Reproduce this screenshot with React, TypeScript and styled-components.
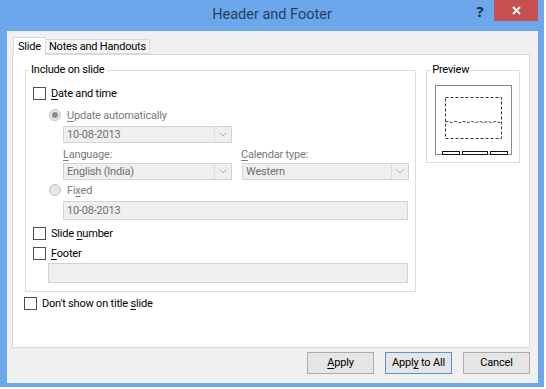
import React from "react";
import styled, { createGlobalStyle } from "styled-components";

const GlobalStyle = createGlobalStyle`
  html, body {
    margin: 0;
    padding: 0;
    background: #ffffff;
  }
  body {
    font-family: Roboto, "Open Sans", sans-serif;
    font-size: 11px;
    letter-spacing: -0.2px;
    color: #000;
  }
  * {
    box-sizing: border-box;
  }
`;

const Frame = styled.div`
  width: 544px;
  height: 387px;
  background: #6ba7ea;
  display: flex;
  flex-direction: column;
`;

const TitleBar = styled.div`
  height: 31px;
  display: grid;
  grid-template-columns: 1fr auto 1fr;
`;

const Title = styled.div`
  grid-column: 2;
  font-size: 14.5px;
  letter-spacing: 0;
  line-height: 30px;
  color: #253f63;
`;

const Controls = styled.div`
  display: flex;
  justify-content: flex-end;
  align-items: flex-start;
  padding-right: 6px;
`;

const HelpButton = styled.div`
  width: 26px;
  height: 21px;
  margin-right: 1px;
  font-family: "Open Sans", sans-serif;
  font-size: 15px;
  font-weight: 700;
  line-height: 22px;
  text-align: center;
  color: #1b2c48;
`;

const CloseButton = styled.div`
  width: 44px;
  height: 21px;
  background: #c75050;
  display: flex;
  align-items: center;
  justify-content: center;
`;

const Client = styled.div`
  flex: 1;
  margin: 0 6px 4px 7px;
  background: #f0f0f0;
  padding: 6px 8px 9px 5px;
  display: flex;
  flex-direction: column;
`;

const TabStrip = styled.div`
  display: flex;
  align-items: flex-end;
  height: 17px;
  padding-left: 1px;
  position: relative;
  z-index: 1;
`;

const Tab = styled.div<{ $active?: boolean }>`
  height: ${(p) => (p.$active ? 18 : 15)}px;
  margin-bottom: ${(p) => (p.$active ? -1 : 0)}px;
  padding: 0 ${(p) => (p.$active ? 4 : 3)}px;
  background: ${(p) => (p.$active ? "#ffffff" : "#f6f6f6")};
  border: 1px solid #d9d9d9;
  border-bottom: ${(p) => (p.$active ? "none" : "1px solid #d9d9d9")};
  border-left: ${(p) => (p.$active ? "1px solid #d9d9d9" : "none")};
  line-height: ${(p) => (p.$active ? 17 : 14)}px;
  white-space: nowrap;
`;

const Panel = styled.div`
  height: 294px;
  background: #ffffff;
  border: 1px solid #d9d9d9;
  padding: 15px 9px 0 11px;
  display: flex;
  flex-direction: column;
`;

const TopRow = styled.div`
  display: flex;
  align-items: flex-start;
  gap: 9px;
`;

const Group = styled.div<{ $w: number; $h: number }>`
  width: ${(p) => p.$w}px;
  height: ${(p) => p.$h}px;
  margin-left: 1px;
  border: 1px solid #dcdcdc;
  display: flex;
  flex-direction: column;
  align-items: flex-start;
`;

const Caption = styled.div`
  margin: -9px 0 0 3px;
  padding: 0 2px;
  height: 16px;
  line-height: 16px;
  background: #ffffff;
  color: #000;
`;

const Row = styled.div<{ $indent?: number; $mt?: number; $h?: number }>`
  display: flex;
  align-items: center;
  height: ${(p) => p.$h ?? 20}px;
  margin-left: ${(p) => p.$indent ?? 0}px;
  margin-top: ${(p) => p.$mt ?? 0}px;
`;

const Box = styled.span`
  width: 13px;
  height: 13px;
  border: 1px solid #4d4d4d;
  background: #ffffff;
  flex: none;
`;

const Radio = styled.span<{ $on?: boolean }>`
  width: 12px;
  height: 12px;
  border-radius: 50%;
  border: 1px solid #c4c4c4;
  background: #e6e6e6;
  flex: none;
  display: flex;
  align-items: center;
  justify-content: center;
  &::after {
    content: "";
    display: ${(p) => (p.$on ? "block" : "none")};
    width: 6px;
    height: 6px;
    border-radius: 50%;
    background: #8d8d8d;
  }
`;

const Label = styled.span<{ $dim?: boolean; $gap?: number }>`
  margin-left: ${(p) => p.$gap ?? 5}px;
  color: ${(p) => (p.$dim ? "#7a7a7a" : "#000")};
  white-space: nowrap;
`;

const U = styled.span`
  text-decoration: underline;
  text-underline-offset: 2px;
`;

const FieldLabel = styled.span<{ $w: number }>`
  width: ${(p) => p.$w}px;
  color: #7a7a7a;
`;

const Field = styled.div<{ $w: number; $h?: number }>`
  width: ${(p) => p.$w}px;
  height: ${(p) => p.$h ?? 17}px;
  border: 1px solid #d3d3d3;
  background: #efefef;
  display: flex;
  align-items: center;
  color: #707070;
  flex: none;
`;

const FieldText = styled.span`
  flex: 1;
  padding-left: 3px;
`;

const Arrow = styled.span`
  width: 17px;
  height: 100%;
  border-left: 1px solid #dedede;
  display: flex;
  align-items: center;
  justify-content: center;
`;

const Fields = styled.div`
  display: flex;
  gap: 10px;
`;

const Thumb = styled.svg`
  margin: 7px 0 0 8px;
  display: block;
`;

const ButtonRow = styled.div`
  display: flex;
  justify-content: flex-end;
  gap: 11px;
  margin-top: 4px;
`;

const Button = styled.div<{ $default?: boolean }>`
  width: 67px;
  height: 22px;
  border: 1px solid ${(p) => (p.$default ? "#5b93cf" : "#acacac")};
  background: #e5e5e5;
  line-height: 20px;
  text-align: center;
`;

const Chevron = () => (
  <svg width="8" height="5" viewBox="0 0 8 5">
    <path d="M0.5 0.5 L4 4 L7.5 0.5" fill="none" stroke="#b0b0b0" strokeWidth="1" />
  </svg>
);

const Select = ({ w, value }: { w: number; value: string }) => (
  <Field $w={w}>
    <FieldText>{value}</FieldText>
    <Arrow>
      <Chevron />
    </Arrow>
  </Field>
);

const SlideThumb = () => (
  <Thumb width="78" height="71" viewBox="0 0 78 71">
    <rect x="0.5" y="0.5" width="76" height="69" fill="#fff" stroke="#8a8a8a" />
    <rect
      x="10.5"
      y="12.5"
      width="56"
      height="41"
      fill="none"
      stroke="#333"
      strokeDasharray="3 2"
    />
    <path
      d="M10.5 37 q2 -1.2 4 0 t4 0 t4 0 t4 0 t4 0 t4 0 t4 0 t4 0 t4 0 t4 0 t4 0 t4 0 t4 0 t4 0"
      fill="none"
      stroke="#333"
      strokeDasharray="3 1.5"
    />
    <rect x="7.5" y="66.5" width="17" height="3" fill="#fff" stroke="#111" />
    <rect x="27.5" y="66.5" width="25" height="3" fill="#fff" stroke="#111" />
    <rect x="55.5" y="66.5" width="17" height="3" fill="#fff" stroke="#111" />
  </Thumb>
);

export default function App() {
  return (
    <>
      <GlobalStyle />
      <Frame>
        <TitleBar>
          <Title>Header and Footer</Title>
          <Controls>
            <HelpButton>?</HelpButton>
            <CloseButton>
              <svg width="9" height="9" viewBox="0 0 9 9">
                <path d="M1 1 L8 8 M8 1 L1 8" stroke="#fff" strokeWidth="1.8" />
              </svg>
            </CloseButton>
          </Controls>
        </TitleBar>
        <Client>
          <TabStrip>
            <Tab $active>Slide</Tab>
            <Tab>Notes and Handouts</Tab>
          </TabStrip>
          <Panel>
            <TopRow>
              <Group $w={392} $h={222}>
                <Caption>Include on slide</Caption>
                <Row $indent={7} $mt={5}>
                  <Box />
                  <Label>
                    <U>D</U>ate and time
                  </Label>
                </Row>
                <Row $indent={23} $mt={2}>
                  <Radio $on />
                  <Label $dim $gap={6}>
                    <U>U</U>pdate automatically
                  </Label>
                </Row>
                <Row $indent={37} $mt={1} $h={17}>
                  <Select w={169} value="10-08-2013" />
                </Row>
                <Row $indent={37} $mt={3} $h={16}>
                  <FieldLabel $w={178}>
                    <U>L</U>anguage:
                  </FieldLabel>
                  <FieldLabel $w={160}>
                    <U>C</U>alendar type:
                  </FieldLabel>
                </Row>
                <Row $indent={37} $mt={1} $h={17}>
                  <Fields>
                    <Select w={169} value="English (India)" />
                    <Select w={167} value="Western" />
                  </Fields>
                </Row>
                <Row $indent={23}>
                  <Radio />
                  <Label $dim $gap={6}>
                    Fi<U>x</U>ed
                  </Label>
                </Row>
                <Row $indent={37} $mt={1} $h={19}>
                  <Field $w={345} $h={19}>
                    <FieldText>10-08-2013</FieldText>
                  </Field>
                </Row>
                <Row $indent={7} $mt={3}>
                  <Box />
                  <Label>
                    Slide <U>n</U>umber
                  </Label>
                </Row>
                <Row $indent={7}>
                  <Box />
                  <Label>
                    <U>F</U>ooter
                  </Label>
                </Row>
                <Row $indent={22} $h={20}>
                  <Field $w={360} $h={20} />
                </Row>
              </Group>
              <Group $w={94} $h={93}>
                <Caption>Preview</Caption>
                <SlideThumb />
              </Group>
            </TopRow>
            <Row $mt={1}>
              <Box />
              <Label>
                Don't show on title <U>s</U>lide
              </Label>
            </Row>
          </Panel>
          <ButtonRow>
            <Button>
              <U>A</U>pply
            </Button>
            <Button $default>
              Appl<U>y</U> to All
            </Button>
            <Button>Cancel</Button>
          </ButtonRow>
        </Client>
      </Frame>
    </>
  );
}
